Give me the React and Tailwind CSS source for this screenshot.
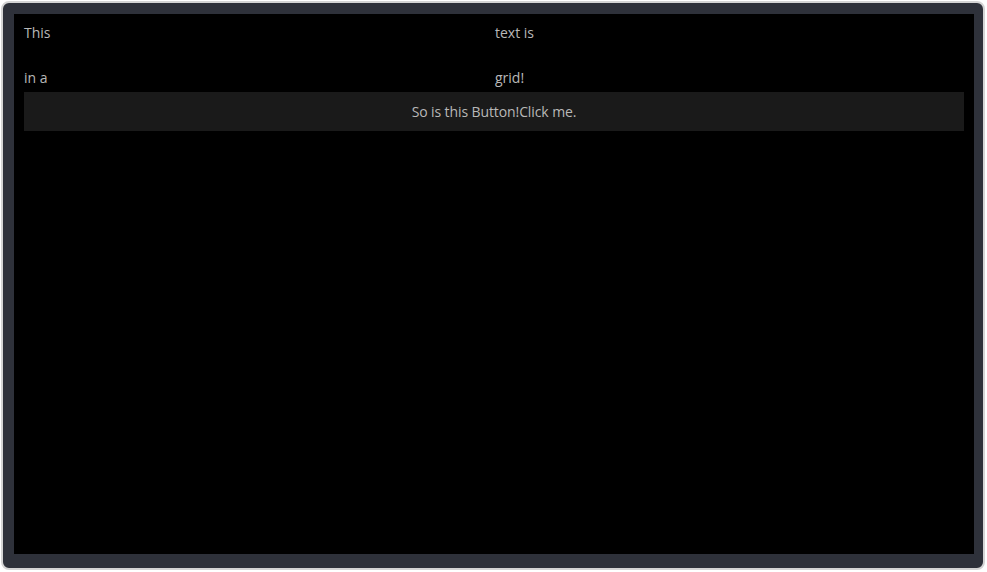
export default function App() {
  return (
    <div className="w-[987px] h-[572px] bg-white p-[1px]" style={{ fontFamily: '"Open Sans", sans-serif' }}>
      <div className="w-[984px] h-[569px] rounded-[8px] border-2 border-[#d4d4d4] bg-[#2e313a] pl-[11px] pr-[9px] pt-[11px] pb-[14px]">
        <div className="w-full h-full bg-black p-[10px] text-[14px] text-[#b8b8b8]">
          <div className="grid grid-cols-2 grid-rows-[45px_23px]">
            <div className="leading-[18px]">This</div>
            <div className="leading-[18px] pl-[1px]">text is</div>
            <div className="leading-[18px]">in a</div>
            <div className="leading-[18px] pl-[1px]">grid!</div>
          </div>
          <button className="w-full h-[39px] bg-[#1a1a1a] text-[#b8b8b8] text-[14px] tracking-[-0.1px]">So is this Button!Click me.</button>
        </div>
      </div>
    </div>
  );
}
